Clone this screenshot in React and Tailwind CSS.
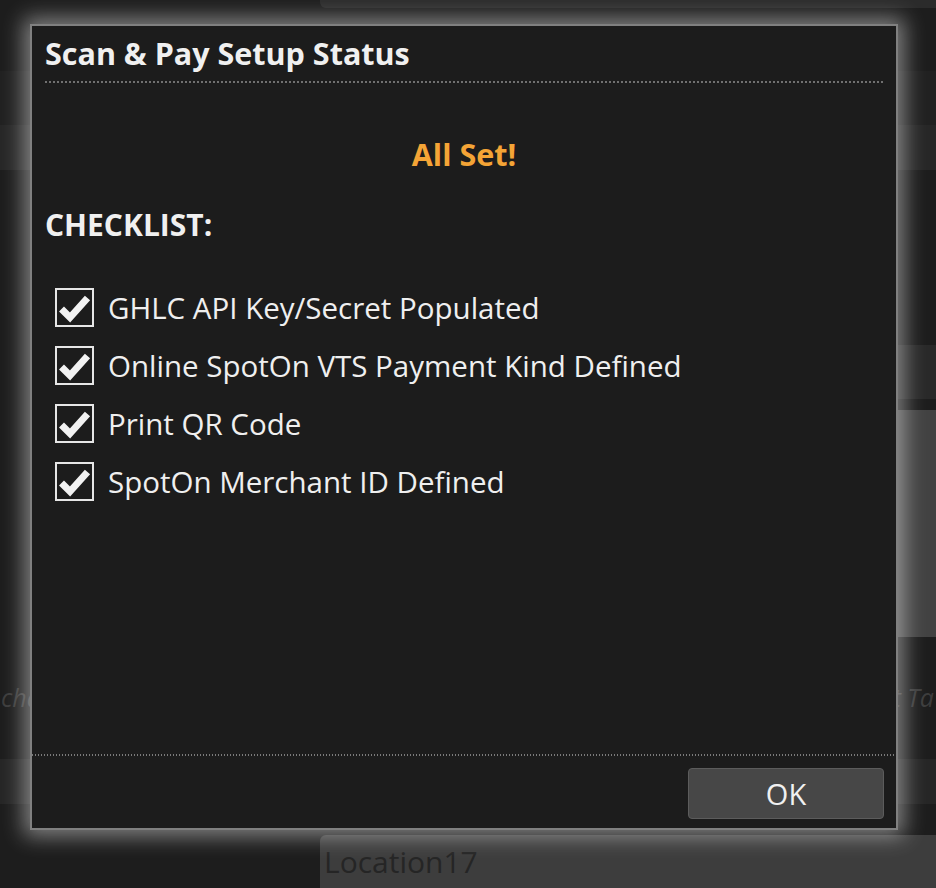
import React from 'react';

const items = [
    'GHLC API Key/Secret Populated',
    'Online SpotOn VTS Payment Kind Defined',
    'Print QR Code',
    'SpotOn Merchant ID Defined',
];

const CheckBox = () => (
    <div className="w-[39px] h-[39px] border-2 border-[#e6e6e6] shrink-0 flex items-center justify-center">
        <svg width="35" height="35" viewBox="0 0 35 35">
            <path d="M4.5 19 L13 27.5 L30.5 8" fill="none" stroke="#f2f2f2" strokeWidth="7" strokeLinejoin="miter" />
        </svg>
    </div>
);

const App = () => {
    return (
        <div className="relative w-[936px] h-[888px] overflow-hidden bg-[#1d1d1d] font-['Open_Sans',sans-serif]">
            {/* background app, mostly hidden by the dialog */}
            <div className="flex flex-col">
                <div className="h-[8px] flex">
                    <div className="w-[320px]" />
                    <div className="flex-1 bg-[#2b2b2b] rounded-bl-md" />
                </div>
                <div className="h-[63px]" />
                <div className="h-[54px] bg-[#212121]" />
                <div className="h-[45px] bg-[#272727]" />
                <div className="h-[175px]" />
                <div className="h-[54px] flex">
                    <div className="w-[600px]" />
                    <div className="flex-1 bg-[#292929]" />
                </div>
                <div className="h-[11px]" />
                <div className="h-[227px] flex">
                    <div className="w-[600px]" />
                    <div className="flex-1 bg-[#424242]" />
                </div>
                <div className="h-[122px] flex items-center justify-between text-[25px] italic text-[#3c3c3c]">
                    <span className="pl-[1px]">cha</span>
                    <span className="pr-[2px]">t Ta</span>
                </div>
                <div className="h-[45px] bg-[#262626]" />
                <div className="h-[31px]" />
                <div className="h-[53px] flex">
                    <div className="w-[320px]" />
                    <div className="flex-1 bg-[#3d3d3d] rounded-tl-md px-[4px] text-[30px] leading-[53px] text-[#252525]">Location17</div>
                </div>
            </div>

            {/* dialog */}
            <div className="absolute left-[30px] top-[24px] w-[868px] h-[806px] border-2 border-[#808080] bg-[#1c1c1c] shadow-[0_0_20px_6px_rgba(255,255,255,0.45)] flex flex-col">
                <div className="px-[13px] pt-[6px]">
                    <h1 className="text-[30.5px] font-bold text-[#f0f0f0] leading-[42px]">Scan &amp; Pay Setup Status</h1>
                    <div className="mt-[7px] h-[2px] bg-[repeating-linear-gradient(90deg,#707070_0_2px,transparent_2px_4px)]" />
                </div>
                <div className="flex-1 px-[13px]">
                    <div className="mt-[50px] text-center text-[30.5px] font-bold text-[#f4a436] leading-[42px]">All Set!</div>
                    <div className="mt-[29px] text-[30px] font-bold text-[#f0f0f0] leading-[42px]">CHECKLIST:</div>
                    <ul className="mt-[42px] pl-[10px] flex flex-col gap-[19px]">
                        {items.map((t) => (
                            <li key={t} className="flex items-center gap-[14px]">
                                <CheckBox />
                                <span className="text-[29.5px] text-[#efefef] leading-[39px]">{t}</span>
                            </li>
                        ))}
                    </ul>
                </div>
                <div className="h-[2px] bg-[repeating-linear-gradient(90deg,#7a7a7a_0_1.5px,transparent_1.5px_3px)]" />
                <div className="h-[72px] flex items-start justify-end pt-[12px] pr-[12px]">
                    <button className="w-[196px] h-[51px] bg-[#474747] border border-[#5c5c5c] rounded-[4px] text-[29px] text-[#f0f0f0]">OK</button>
                </div>
            </div>
        </div>
    );
};

export default App;
